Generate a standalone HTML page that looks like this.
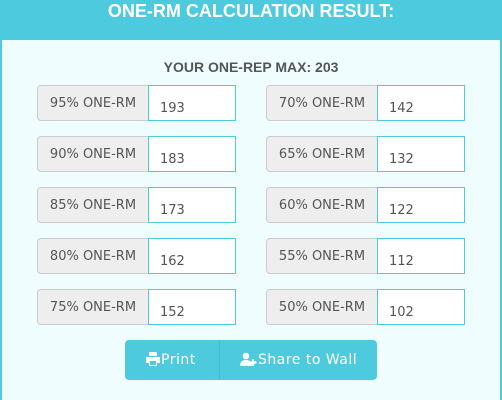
<!DOCTYPE html>
<html><head><style>
*{box-sizing:border-box;margin:0;padding:0}
body{width:502px;height:400px;overflow:hidden;background:#4ecadf;font-family:"DejaVu Sans","Liberation Sans",sans-serif;position:relative}
.h{position:absolute;left:0;top:0;width:502px;height:40px;color:#fff;font:bold 18px "Liberation Sans",sans-serif;text-align:center;line-height:22px}
.b{position:absolute;left:2px;top:40px;width:498px;height:360px;background:#effdff}
.t{position:absolute;left:0;width:502px;top:59px;text-align:center;font:bold 14px "Liberation Sans",sans-serif;color:#555}
.l{position:absolute;height:36px;width:112px;background:#eee;border:1px solid #ccc;border-radius:4px 0 0 4px;color:#555;font-size:13px;line-height:36px;text-align:center}
.i{position:absolute;height:36px;width:88px;background:#fff;border:1px solid #4ecadf;color:#555;font-size:13px;padding:15px 0 0 11px}
.btn{position:absolute;top:340px;height:40px;left:125px;width:252px;background:#4ecadf;border-radius:4px;color:#fff;font-size:14px;letter-spacing:.5px}
</style></head><body>
<div class="h">ONE-RM CALCULATION RESULT:</div>
<div class="b"></div>
<div class="t">YOUR ONE-REP MAX: 203</div>
<div class="l" style="left:37px;top:85px">95% ONE-RM</div><div class="i" style="left:148px;top:85px">193</div>
<div class="l" style="left:37px;top:136px">90% ONE-RM</div><div class="i" style="left:148px;top:136px">183</div>
<div class="l" style="left:37px;top:187px">85% ONE-RM</div><div class="i" style="left:148px;top:187px">173</div>
<div class="l" style="left:37px;top:238px">80% ONE-RM</div><div class="i" style="left:148px;top:238px">162</div>
<div class="l" style="left:37px;top:289px">75% ONE-RM</div><div class="i" style="left:148px;top:289px">152</div>
<div class="l" style="left:266px;top:85px">70% ONE-RM</div><div class="i" style="left:377px;top:85px">142</div>
<div class="l" style="left:266px;top:136px">65% ONE-RM</div><div class="i" style="left:377px;top:136px">132</div>
<div class="l" style="left:266px;top:187px">60% ONE-RM</div><div class="i" style="left:377px;top:187px">122</div>
<div class="l" style="left:266px;top:238px">55% ONE-RM</div><div class="i" style="left:377px;top:238px">112</div>
<div class="l" style="left:266px;top:289px">50% ONE-RM</div><div class="i" style="left:377px;top:289px">102</div>
<div class="btn">
<div style="position:absolute;left:94px;top:0;width:1px;height:40px;background:#45b8cc"></div>
<svg style="position:absolute;left:20px;top:11px" width="16" height="16" viewBox="0 0 16 16"><path d="M4 1h7l1 1v3H4z M1 6h14v6h-3v3H4v-3H1z" fill="#fff"/><rect x="5" y="10" width="6" height="4" fill="#4ecadf"/></svg>
<span style="position:absolute;left:36px;top:12px">Print</span>
<svg style="position:absolute;left:115px;top:12px" width="18" height="15" viewBox="0 0 18 15"><circle cx="6" cy="4" r="3.3" fill="#fff"/><path d="M0 14c0-4 2-6 6-6s6 2 6 6z" fill="#fff"/><path d="M13 7v7M9.5 10.5h7" stroke="#fff" stroke-width="2.2"/></svg>
<span style="position:absolute;left:133px;top:12px">Share to Wall</span>
</div>
</body></html>
